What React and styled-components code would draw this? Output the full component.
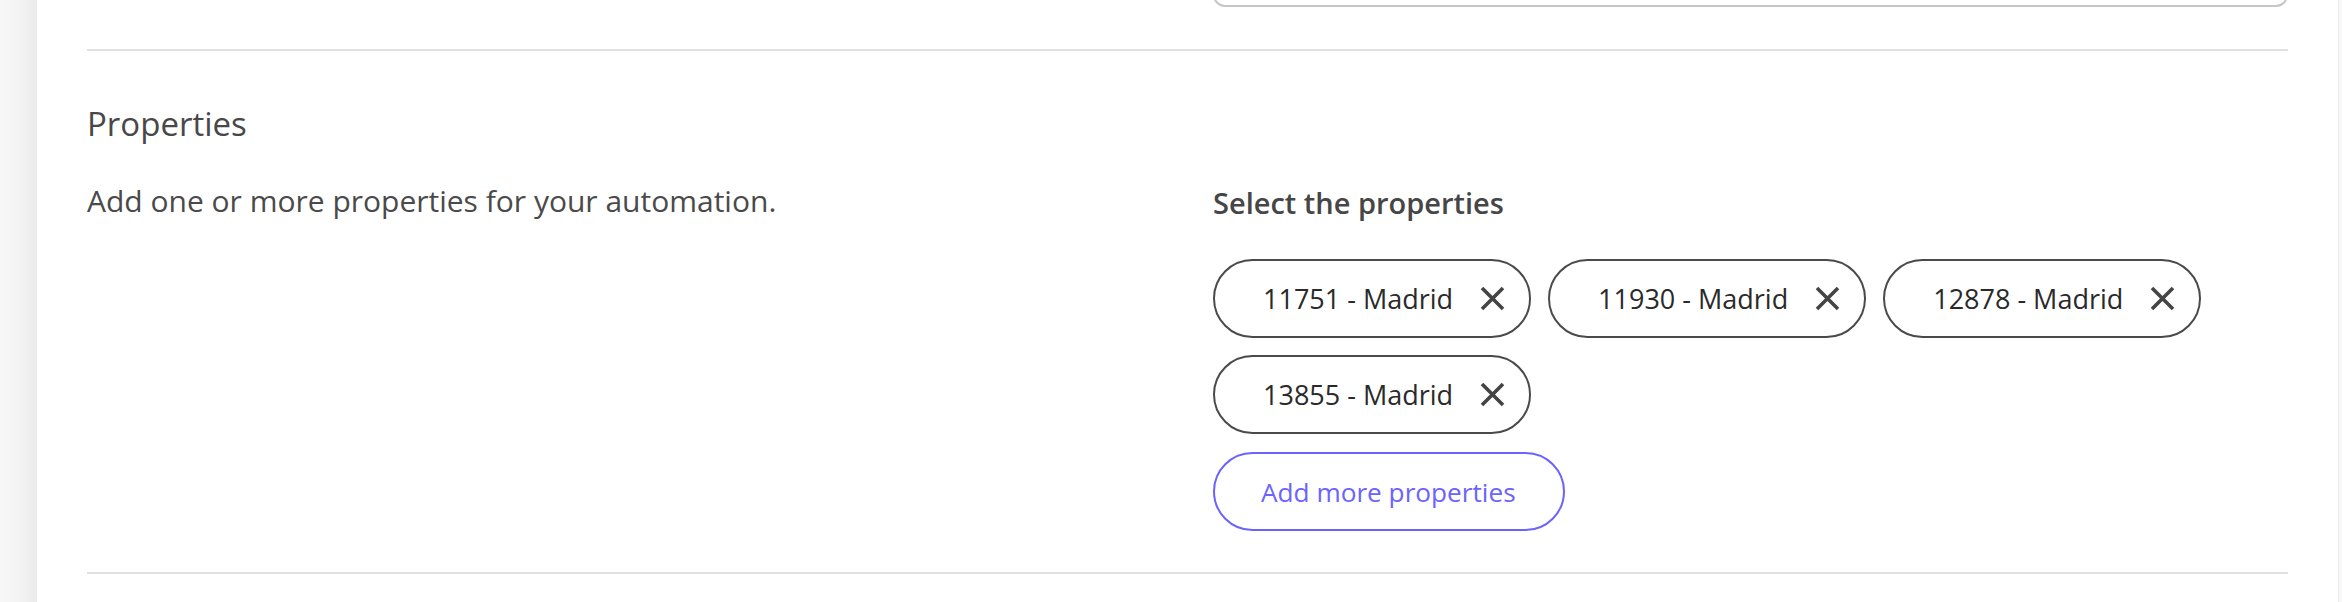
import React from "react";
import styled, { createGlobalStyle } from "styled-components";

const GlobalStyle = createGlobalStyle`
  html, body {
    margin: 0;
    padding: 0;
    height: 100%;
    overflow: hidden;
    background: #f7f7f7;
  }
  body {
    font-family: "Open Sans", "Noto Sans", sans-serif;
  }
  * { box-sizing: border-box; }
`;

const Page = styled.div`
  display: flex;
  min-height: 602px;
  padding-right: 3px;
  background: linear-gradient(to right, #f7f7f7 0px, #f3f3f3 22px, #eaeaea 37px, #f7f7f7 37px);
`;

const Panel = styled.main`
  flex: 1;
  margin-left: 37px;
  background: #ffffff;
  border-right: 1px solid #e9e9e9;
  padding: 0 50px 0 50px;
  min-height: 602px;
  overflow: hidden;
`;

const Section = styled.section`
  padding: ${(p) => p.$pad || "0"};
  border-top: ${(p) => (p.$divided ? "2px solid #e0e0e0" : "none")};
`;

const Columns = styled.div`
  display: grid;
  grid-template-columns: 1fr 1fr;
  column-gap: 51px;
  align-items: start;
`;

const Column = styled.div`
  display: flex;
  flex-direction: column;
  align-items: flex-start;
  min-width: 0;
`;

const TextInput = styled.div`
  width: 100%;
  height: 60px;
  margin-top: -53px;
  border: 2px solid #c6c6c6;
  border-radius: 12px;
  background: #fff;
`;

const Heading = styled.h2`
  margin: 0 0 35px 0;
  font-size: 33px;
  line-height: 44px;
  font-weight: 500;
  color: #484848;
`;

const Description = styled.p`
  margin: 0;
  font-size: 30px;
  line-height: 40px;
  font-weight: 400;
  color: #4a4a4a;
`;

const Label = styled.div`
  margin: 2px 0 36px 0;
  font-size: 29px;
  line-height: 40px;
  font-weight: 600;
  color: #464646;
`;

const ChipList = styled.div`
  display: flex;
  flex-wrap: wrap;
  gap: 17px 17px;
`;

const Chip = styled.div`
  display: inline-flex;
  align-items: center;
  height: 79px;
  padding: 0 24px 0 48px;
  border: 2px solid #4a4a4a;
  border-radius: 40px;
  background: #fff;
`;

const ChipText = styled.span`
  font-size: 27px;
  line-height: 36px;
  color: #2a2a2a;
  white-space: nowrap;
`;

const RemoveButton = styled.button`
  display: inline-flex;
  align-items: center;
  justify-content: center;
  margin-left: 27px;
  padding: 0;
  width: 25px;
  height: 25px;
  border: none;
  background: transparent;
  color: #444444;
  cursor: pointer;
`;

const AddButton = styled.button`
  margin-top: 18px;
  height: 79px;
  padding: 0 47px 0 46px;
  border: 2px solid #6c63ff;
  border-radius: 40px;
  background: #fff;
  color: #6c63ff;
  font-family: "Open Sans", "Noto Sans", sans-serif;
  font-size: 26.2px;
  line-height: 36px;
  font-weight: 400;
  cursor: pointer;
`;

const CloseIcon = () => (
  <svg width="25" height="25" viewBox="0 0 25 25" fill="none">
    <path d="M2 2 L23 23 M23 2 L2 23" stroke="currentColor" strokeWidth="3.6" strokeLinecap="butt" />
  </svg>
);

const properties = ["11751 - Madrid", "11930 - Madrid", "12878 - Madrid", "13855 - Madrid"];

export default function App() {
  return (
    <>
      <GlobalStyle />
      <Page>
        <Panel>
          <Section $pad="0 0 42px 0">
            <Columns>
              <Column />
              <Column>
                <TextInput />
              </Column>
            </Columns>
          </Section>
          <Section $divided $pad="51px 0 41px 0">
            <Heading>Properties</Heading>
            <Columns>
              <Column>
                <Description>Add one or more properties for your automation.</Description>
              </Column>
              <Column>
                <Label>Select the properties</Label>
                <ChipList>
                  {properties.map((p) => (
                    <Chip key={p}>
                      <ChipText>{p}</ChipText>
                      <RemoveButton aria-label={`Remove ${p}`}>
                        <CloseIcon />
                      </RemoveButton>
                    </Chip>
                  ))}
                </ChipList>
                <AddButton>Add more properties</AddButton>
              </Column>
            </Columns>
          </Section>
          <Section $divided $pad="0" />
        </Panel>
      </Page>
    </>
  );
}
